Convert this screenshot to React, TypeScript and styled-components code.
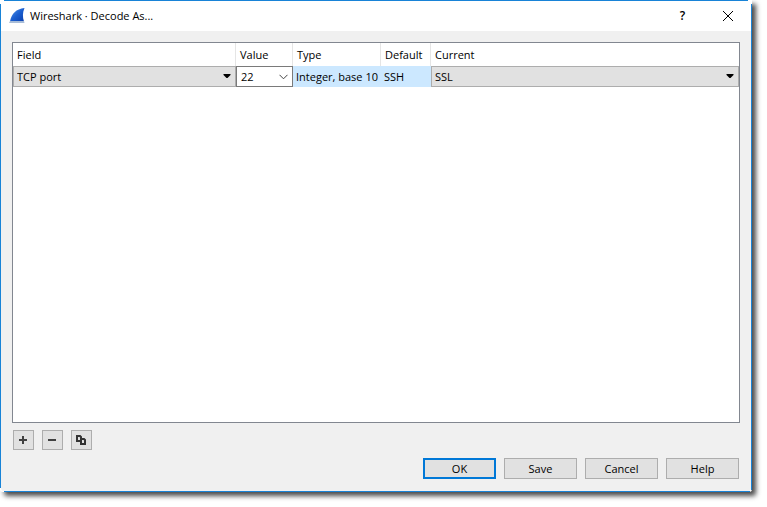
import React from "react";
import styled, { createGlobalStyle, css } from "styled-components";

const GlobalStyle = createGlobalStyle`
  *, *::before, *::after { box-sizing: border-box; }
  body {
    margin: 0;
    background: #fff;
    color: #000;
    font-family: "Open Sans", "Noto Sans", sans-serif;
    font-size: 11px;
    line-height: 16px;
  }
  button, select { font: inherit; color: inherit; margin: 0; border-radius: 0; }
`;

const Desktop = styled.main`
  display: flex;
  min-height: 100vh;
  padding: 0 15px 15px 0;
`;

const edge = "linear-gradient(#1883d7, #1883d7)";

const Dialog = styled.section`
  flex: 1;
  min-width: 0;
  display: flex;
  flex-direction: column;
  padding: 1px;
  border-radius: 0 0 3px 3px;
  background:
    ${edge} 4px 0 / calc(100% - 8px) 1px no-repeat,
    ${edge} 4px 100% / calc(100% - 6px) 1px no-repeat,
    ${edge} 0 4px / 1px calc(100% - 8px) no-repeat,
    ${edge} 100% 4px / 1px calc(100% - 6px) no-repeat,
    #fff;
  box-shadow: 4px 4px 5px rgba(0, 0, 0, 0.7);
`;

const TitleBar = styled.header`
  display: flex;
  align-items: center;
  height: 30px;
  padding-left: 8px;
  background: #fff;
`;

const Title = styled.h1`
  flex: 1;
  margin: 0 0 0 4px;
  font-size: 11px;
  font-weight: 400;
`;

const CaptionButton = styled.button`
  display: flex;
  align-items: center;
  justify-content: center;
  width: 45px;
  height: 30px;
  padding: 0;
  border: 0;
  background: none;
  font-size: 12px;
  font-weight: 600;
`;

const CaptionButtons = styled.div`
  display: flex;
  padding-right: 1px;
`;

const Body = styled.div`
  flex: 1;
  display: flex;
  flex-direction: column;
  padding: 11px 11px 12px;
  background: #f0f0f0;
  border-radius: 0 0 3px 3px;
`;

const TablePanel = styled.div`
  flex: 1;
  border: 1px solid #828790;
  background: #fff;
`;

const Table = styled.table`
  width: 100%;
  table-layout: fixed;
  border-collapse: separate;
  border-spacing: 0;
`;

const Column = styled.col<{ $width?: number }>`
  width: ${(p) => (p.$width ? `${p.$width}px` : "auto")};
`;

const HeadCell = styled.th`
  height: 23px;
  padding: 0 4px;
  border-right: 1px solid #e5e5e5;
  text-align: left;
  font-weight: 400;
  white-space: nowrap;

  &:last-child { border-right: 0; }
`;

const Cell = styled.td<{ $text?: boolean }>`
  height: 21px;
  padding: ${(p) => (p.$text ? "0 3px" : "0")};
  background: #cce8ff;
  white-space: nowrap;
`;

const SelectBox = styled.div`
  display: grid;
  align-items: center;
  & > * { grid-area: 1 / 1; }
  & > svg { justify-self: end; margin-right: 5px; pointer-events: none; }
`;

const Select = styled.select<{ $editable?: boolean }>`
  appearance: none;
  width: 100%;
  height: 21px;
  padding: 0 16px 0 ${(p) => (p.$editable ? "4px" : "3px")};
  border: 1px solid ${(p) => (p.$editable ? "#7a7a7a" : "#adadad")};
  background: ${(p) => (p.$editable ? "#fff" : "#e1e1e1")};
`;

const pushButton = css`
  display: flex;
  align-items: center;
  justify-content: center;
  padding: 0;
  border: 1px solid #adadad;
  background: #e1e1e1;
`;

const Tools = styled.div`
  display: flex;
  gap: 8px;
  padding: 7px 1px 8px;
`;

const ToolButton = styled.button`
  ${pushButton}
  width: 21px;
  height: 20px;
`;

const Actions = styled.footer`
  display: flex;
  justify-content: flex-end;
  gap: 8px;
  padding-right: 1px;
`;

const ActionButton = styled.button<{ $primary?: boolean }>`
  ${pushButton}
  width: 73px;
  height: 21px;
  ${(p) => p.$primary && "border: 2px solid #0078d7;"}
`;

const Fin = () => (
  <svg width="17" height="16" viewBox="0 0 17 16" aria-hidden="true">
    <defs>
      <linearGradient id="fin" x1="0" y1="0" x2="1" y2="1">
        <stop offset="0" stopColor="#5b9bea" />
        <stop offset="0.5" stopColor="#1b5fd0" />
        <stop offset="1" stopColor="#0a3fae" />
      </linearGradient>
    </defs>
    <path d="M1 13.5C2.500 5.500 7 1 15.500 0C13.500 4.500 13.500 9 15 13.500Z" fill="url(#fin)" />
    <path d="M0 15L1 13H15L15.500 15Z" fill="#a9bdd8" />
  </svg>
);

const Arrow = () => (
  <svg width="8" height="5" viewBox="0 0 8 5" aria-hidden="true">
    <path d="M0.500 0H7.500V1L4.500 4H3.500L0.500 1Z" fill="#000" />
  </svg>
);

const Chevron = () => (
  <svg width="9" height="6" viewBox="0 0 9 6" fill="none" stroke="#444" aria-hidden="true">
    <path d="M0.500 0.800L4.500 4.800L8.500 0.800" />
  </svg>
);

const Cross = () => (
  <svg width="12" height="12" viewBox="0 0 12 12" fill="none" stroke="#000" aria-hidden="true">
    <path d="M1 1L11 11M11 1L1 11" />
  </svg>
);

const Plus = () => (
  <svg width="9" height="8" viewBox="0 0 9 8" fill="#404040" aria-hidden="true">
    <path d="M0 3H3V0H5V3H8V5H5V8H3V5H0Z" />
  </svg>
);

const Minus = () => (
  <svg width="9" height="8" viewBox="0 0 9 8" fill="#404040" aria-hidden="true">
    <path d="M0 3H8V5H0Z" />
  </svg>
);

const Copy = () => (
  <svg width="11" height="10" viewBox="0 0 11 10" aria-hidden="true">
    <path d="M1 1H4L5 2V6H1Z" fill="#e1e1e1" stroke="#333" strokeWidth="2" />
    <path d="M5 4H8L9 5V9H5Z" fill="#e1e1e1" stroke="#333" strokeWidth="2" />
  </svg>
);

export default function App() {
  return (
    <>
      <GlobalStyle />
      <Desktop>
        <Dialog role="dialog" aria-labelledby="title">
          <TitleBar>
            <Fin />
            <Title id="title">Wireshark · Decode As...</Title>
            <CaptionButtons>
              <CaptionButton aria-label="What's this?">?</CaptionButton>
              <CaptionButton aria-label="Close"><Cross /></CaptionButton>
            </CaptionButtons>
          </TitleBar>
          <Body>
            <TablePanel>
              <Table>
                <colgroup>
                  <Column $width={223} />
                  <Column $width={57} />
                  <Column $width={88} />
                  <Column $width={50} />
                  <Column />
                </colgroup>
                <thead>
                  <tr>
                    {["Field", "Value", "Type", "Default", "Current"].map((name) => (
                      <HeadCell key={name} scope="col">{name}</HeadCell>
                    ))}
                  </tr>
                </thead>
                <tbody>
                  <tr>
                    <Cell>
                      <SelectBox>
                        <Select aria-label="Field"><option>TCP port</option></Select>
                        <Arrow />
                      </SelectBox>
                    </Cell>
                    <Cell>
                      <SelectBox>
                        <Select $editable aria-label="Value"><option>22</option></Select>
                        <Chevron />
                      </SelectBox>
                    </Cell>
                    <Cell $text>Integer, base 10</Cell>
                    <Cell $text>SSH</Cell>
                    <Cell>
                      <SelectBox>
                        <Select aria-label="Current"><option>SSL</option></Select>
                        <Arrow />
                      </SelectBox>
                    </Cell>
                  </tr>
                </tbody>
              </Table>
            </TablePanel>
            <Tools>
              <ToolButton aria-label="Add"><Plus /></ToolButton>
              <ToolButton aria-label="Remove"><Minus /></ToolButton>
              <ToolButton aria-label="Copy"><Copy /></ToolButton>
            </Tools>
            <Actions>
              <ActionButton $primary>OK</ActionButton>
              <ActionButton>Save</ActionButton>
              <ActionButton>Cancel</ActionButton>
              <ActionButton>Help</ActionButton>
            </Actions>
          </Body>
        </Dialog>
      </Desktop>
    </>
  );
}
